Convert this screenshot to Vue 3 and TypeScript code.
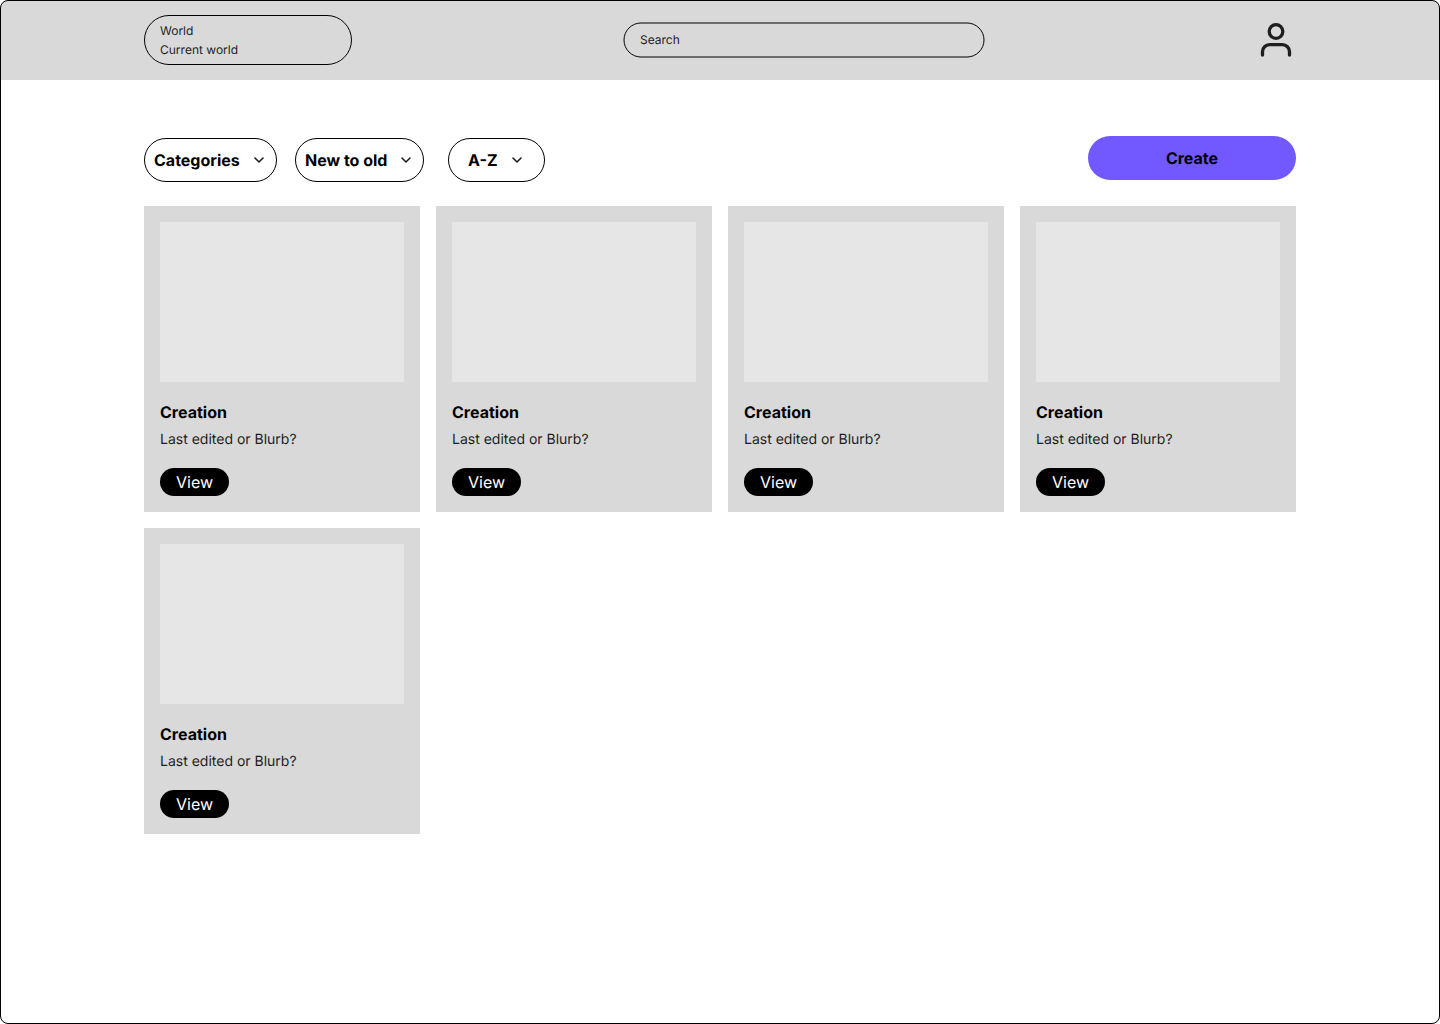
<script setup lang="ts">
interface SortFilter {
  label: string;
  mod: string;
}

const filters: SortFilter[] = [
  { label: 'Categories', mod: 'filter-categories' },
  { label: 'New to old', mod: 'filter-date' },
  { label: 'A-Z', mod: 'filter-alpha' },
];

const creations = [1, 2, 3, 4, 5];
</script>

<template>
  <div class="frame">
    <header class="topbar">
      <div class="world-pill">
        <span>World</span>
        <span>Current world</span>
      </div>
      <div class="search">Search</div>
      <svg class="user-icon" width="40" height="40" viewBox="0 0 40 40" fill="none" aria-hidden="true">
        <circle cx="20" cy="11.5" r="6.8" stroke="#1e1e1e" stroke-width="3.3" />
        <path d="M6.5 35v-3.3a7 7 0 0 1 7-7h13a7 7 0 0 1 7 7v3.3" stroke="#1e1e1e" stroke-width="3.3" stroke-linecap="round" />
      </svg>
    </header>

    <main class="content">
      <div class="toolbar">
        <button v-for="f in filters" :key="f.label" class="filter" :class="f.mod">
          <span>{{ f.label }}</span>
          <svg width="16" height="16" viewBox="0 0 16 16" fill="none" aria-hidden="true">
            <path d="M4 6l4 4 4-4" stroke="#1e1e1e" stroke-width="1.6" stroke-linecap="round" stroke-linejoin="round" />
          </svg>
        </button>
        <button class="create">Create</button>
      </div>

      <div class="grid">
        <article v-for="n in creations" :key="n" class="card">
          <div class="thumb"></div>
          <h3 class="card-title">Creation</h3>
          <p class="card-sub">Last edited or Blurb?</p>
          <button class="view">View</button>
        </article>
      </div>
    </main>
  </div>
</template>

<style>
html,
body {
  margin: 0;
  background: #fff;
}
</style>

<style scoped>
.frame {
  position: relative;
  width: 1440px;
  height: 1024px;
  overflow: hidden;
  background: #fff;
  font-family: Inter, "Liberation Sans", sans-serif;
  text-rendering: geometricPrecision;
  color: #000;
}
/* 1px outline sits on top of the header */
.frame::after {
  content: "";
  position: absolute;
  inset: 0;
  border: 1px solid #000;
  border-radius: 8px;
  box-shadow: 0 0 0 8px #fff;
  pointer-events: none;
}
.topbar {
  display: flex;
  align-items: center;
  height: 80px;
  padding: 0 144px;
  box-sizing: border-box;
  background: #d9d9d9;
}
.world-pill {
  display: flex;
  flex-direction: column;
  justify-content: center;
  width: 208px;
  height: 50px;
  padding-left: 15px;
  box-sizing: border-box;
  border: 1px solid #000;
  border-radius: 25px;
  font-size: 12px;
  line-height: 19px;
  color: #1e1e1e;
}
.search {
  position: relative;
  display: flex;
  align-items: center;
  width: 360px;
  height: 34px;
  margin-left: 272px;
  padding: 0 0 1px 16px;
  box-sizing: border-box;
  font-size: 12px;
  color: #1e1e1e;
}
/* outline lands on half pixels, so its straight edges blur to grey */
.search::before {
  content: "";
  position: absolute;
  top: 0;
  left: 0;
  width: 361px;
  height: 35px;
  box-sizing: border-box;
  border: 1px solid #000;
  border-radius: 17.5px;
  transform: translate(-0.5px, -0.5px);
}
.user-icon {
  margin-left: auto;
}
.content {
  padding: 56px 144px 0;
}
.toolbar {
  display: flex;
  align-items: flex-start;
  height: 70px;
}
.filter {
  display: flex;
  align-items: center;
  height: 44px;
  margin-top: 2px;
  box-sizing: border-box;
  border: 1px solid #000;
  border-radius: 22px;
  background: #fff;
  font: 700 16px Inter, "Liberation Sans", sans-serif;
  text-rendering: geometricPrecision;
  color: #000;
}
.filter-categories {
  width: 133px;
  padding: 0 0 0 9px;
  gap: 11px;
}
.filter-date {
  width: 129px;
  margin-left: 18px;
  padding: 0 0 0 9px;
  gap: 11px;
}
.filter-alpha {
  width: 97px;
  margin-left: 24px;
  padding: 0 0 0 19px;
  gap: 11px;
}
.create {
  width: 208px;
  height: 44px;
  margin-left: auto;
  border: none;
  border-radius: 22px;
  background: #7259ff;
  font: 700 16px Inter, "Liberation Sans", sans-serif;
  text-rendering: geometricPrecision;
  color: #000;
}
.grid {
  display: grid;
  grid-template-columns: repeat(4, 276px);
  gap: 16px;
}
.card {
  height: 306px;
  padding: 16px;
  box-sizing: border-box;
  background: #d9d9d9;
}
.thumb {
  height: 160px;
  background: #e6e6e6;
}
.card-title {
  margin: 20px 0 0;
  font-size: 16px;
  font-weight: 700;
  line-height: 20px;
}
.card-sub {
  margin: 8px 0 0;
  font-size: 14px;
  line-height: 20px;
  color: #1e1e1e;
}
.view {
  display: block;
  height: 28px;
  margin-top: 18px;
  padding: 0 16px;
  border: none;
  border-radius: 14px;
  background: #000;
  font: 400 16px Inter, "Liberation Sans", sans-serif;
  text-rendering: geometricPrecision;
  color: #fff;
}
</style>
